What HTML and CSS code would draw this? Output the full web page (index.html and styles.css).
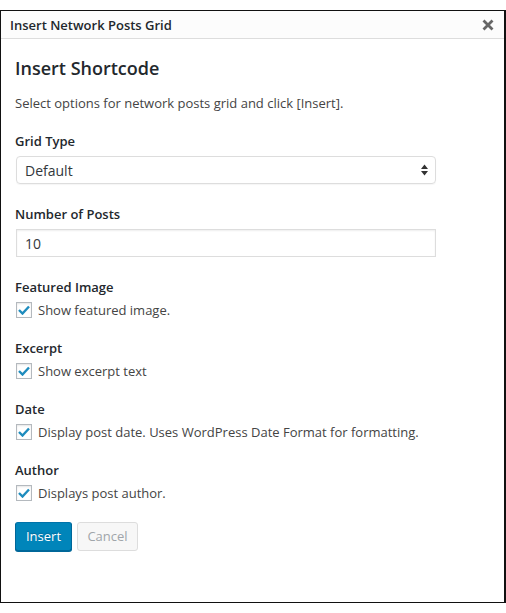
FILE: index.html
```html
<!DOCTYPE html>
<html>
<head>
<meta charset="utf-8">
<link rel="stylesheet" href="styles.css">
</head>
<body>
<div class="dialog">
  <div class="dialog-header">
    <span class="dialog-title">Insert Network Posts Grid</span>
    <svg class="close" width="12" height="12" viewBox="0 0 12 12"><path d="M1.5 1.5L10.5 10.5M10.5 1.5L1.5 10.5" stroke="#666" stroke-width="2.8" stroke-linecap="butt"/></svg>
  </div>
  <div class="dialog-body">
    <h2 class="heading">Insert Shortcode</h2>
    <p class="intro">Select options for network posts grid and click [Insert].</p>

    <div class="field">
      <div class="label">Grid Type</div>
      <div class="select">
        <span>Default</span>
        <svg class="arrows" width="7" height="12" viewBox="0 0 7 12"><path d="M3.5 0.5L7 5H0z M0 7H7L3.5 11.5z" fill="#333"/></svg>
      </div>
    </div>

    <div class="field">
      <div class="label">Number of Posts</div>
      <div class="input">10</div>
    </div>

    <div class="field check-field">
      <div class="label">Featured Image</div>
      <div class="check-row"><span class="checkbox"><svg width="12" height="10" viewBox="0 0 12 10"><path d="M1 5L4.5 8.5L11 1.5" fill="none" stroke="#1e8cbe" stroke-width="2.4"/></svg></span>Show featured image.</div>
    </div>

    <div class="field check-field">
      <div class="label">Excerpt</div>
      <div class="check-row"><span class="checkbox"><svg width="12" height="10" viewBox="0 0 12 10"><path d="M1 5L4.5 8.5L11 1.5" fill="none" stroke="#1e8cbe" stroke-width="2.4"/></svg></span>Show excerpt text</div>
    </div>

    <div class="field check-field">
      <div class="label">Date</div>
      <div class="check-row"><span class="checkbox"><svg width="12" height="10" viewBox="0 0 12 10"><path d="M1 5L4.5 8.5L11 1.5" fill="none" stroke="#1e8cbe" stroke-width="2.4"/></svg></span>Display post date. Uses WordPress Date Format for formatting.</div>
    </div>

    <div class="field check-field">
      <div class="label">Author</div>
      <div class="check-row"><span class="checkbox"><svg width="12" height="10" viewBox="0 0 12 10"><path d="M1 5L4.5 8.5L11 1.5" fill="none" stroke="#1e8cbe" stroke-width="2.4"/></svg></span>Displays post author.</div>
    </div>

    <div class="buttons">
      <span class="btn btn-primary">Insert</span>
      <span class="btn btn-disabled">Cancel</span>
    </div>
  </div>
</div>
</body>
</html>
```

FILE: styles.css
```css
* { box-sizing: border-box; }
html, body { margin: 0; padding: 0; background: #fff; }
body {
  font-family: "Open Sans", "Liberation Sans", sans-serif;
  font-size: 13px;
  color: #444;
}
.dialog {
  margin-top: 10px;
  width: 506px;
  height: 593px;
  border: 1.5px solid #111;
  border-right-width: 2px;
  background: #fff;
}
.dialog-header {
  height: 28px;
  background: #fcfcfc;
  border-bottom: 1px solid #ddd;
  display: flex;
  align-items: center;
  justify-content: space-between;
  padding: 0 9px 0 9px;
}
.dialog-title {
  font-weight: 600;
  font-size: 13px;
  color: #23282d;
}
.close { display: block; margin-top: 1px; margin-right: 1px; }
.dialog-body { padding: 0 14px; }
.heading {
  margin: 17px 0 0;
  font-size: 18px;
  line-height: 24px;
  font-weight: 600;
  color: #23282d;
}
.intro {
  margin: 13px 0 0;
  line-height: 20px;
  color: #444;
}
.field { margin-top: 18px; }
.label {
  font-weight: 600;
  line-height: 20px;
  color: #23282d;
}
.select, .input {
  margin-top: 5px;
  margin-left: 1px;
  width: 420px;
  height: 28px;
  border: 1px solid #ddd;
  display: flex;
  align-items: center;
  padding: 0 7px 0 8px;
  font-size: 14px;
  color: #32373c;
  box-shadow: inset 0 1px 2px rgba(0,0,0,0.07);
}
.select {
  border-radius: 4px;
  justify-content: space-between;
  box-shadow: 0 1px 1px rgba(0,0,0,0.04);
}
.field + .field { margin-top: 20px; }
.check-field + .check-field { margin-top: 18px; }
.check-row {
  margin-top: 3px;
  display: flex;
  align-items: center;
  line-height: 20px;
  height: 20px;
  margin-left: 1px;
  color: #444;
}
.checkbox {
  width: 16px;
  height: 16px;
  border: 1px solid #b4b9be;
  background: #fff;
  box-shadow: inset 0 1px 2px rgba(0,0,0,0.1);
  display: inline-flex;
  align-items: center;
  justify-content: center;
  margin-right: 6px;
}
.buttons {
  margin-top: 19px;
  display: flex;
  gap: 5px;
}
.btn {
  height: 29px;
  line-height: 27px;
  padding: 0 10px;
  border-radius: 3px;
  border: 1px solid;
  font-size: 13px;
}
.btn-primary {
  width: 57px;
  text-align: center;
  padding: 0;
  background: #0085ba;
  border-color: #0073aa #006799 #006799;
  box-shadow: 0 1px 0 #006799;
  color: #fff;
  text-shadow: 0 -1px 1px #006799;
}
.btn-disabled {
  width: 61px;
  text-align: center;
  padding: 0;
  background: #f7f7f7;
  border-color: #ddd;
  color: #a0a5aa;
}
```
